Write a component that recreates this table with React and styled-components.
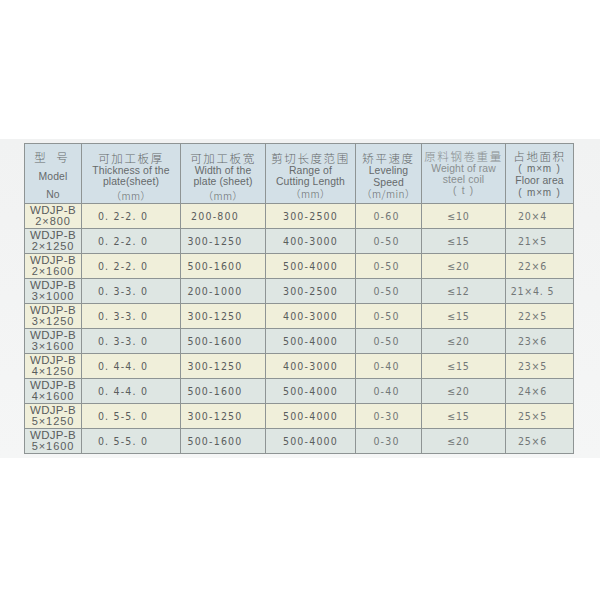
import React from "react";
import styled, { createGlobalStyle } from "styled-components";

const Global = createGlobalStyle`
  html, body { margin: 0; padding: 0; background: #ffffff; }
  body { font-family: "Liberation Sans", Arial, sans-serif; }
`;

const Page = styled.div`
  width: 600px;
  height: 600px;
  padding-top: 139px;
  box-sizing: border-box;
`;

const Band = styled.div`
  background: linear-gradient(#f1f2f2, #f5f6f6);
  padding: 4px 0 4px 24px;
`;

const Table = styled.table`
  border-collapse: collapse;
  table-layout: fixed;
  width: 549px;
  border: 1px solid #6f7272;
  color: #585b5b;
`;

const HeadRow = styled.tr`
  height: 60px;
  background: #d3e0e7;
`;

const HeadCell = styled.th`
  border: 1px solid #8e9494;
  vertical-align: top;
  padding: ${(p) => p.$top}px 0 0 0;
  font-weight: normal;
  text-align: center;
  color: ${(p) => (p.$light ? "#8a8f90" : "#666a6b")};
`;

const Cn = styled.div`
  font-family: "Noto Sans CJK SC", sans-serif;
  font-size: 11.5px;
  line-height: 13px;
  letter-spacing: ${(p) => p.$ls ?? 1.6}px;
  font-weight: 300;
`;

const En = styled.div`
  font-size: 10.4px;
  line-height: ${(p) => p.$lh || 11}px;
  letter-spacing: 0.1px;
`;

const Unit = styled.div`
  font-family: ${(p) =>
    p.$latin ? '"Liberation Sans", sans-serif' : '"Noto Sans CJK SC", sans-serif'};
  font-size: 10px;
  line-height: 12px;
  margin-top: ${(p) => p.$gap || 0}px;
  letter-spacing: ${(p) => (p.$latin ? 0.8 : 0.5)}px;
  word-spacing: 1px;
  font-weight: 300;
`;

const ModelHead = styled.div`
  display: flex;
  flex-direction: column;
  align-items: center;
  gap: 7px;
`;

const Row = styled.tr`
  height: 25px;
  background: ${(p) => (p.$alt ? "#dee6e3" : "#f0efda")};
`;

const ModelCell = styled.td`
  border: 1px solid #8e9494;
  text-align: center;
  padding: 0;
  font-size: 11px;
  line-height: 11.5px;
  color: #5a5d5d;
`;

const ModelName = styled.div`
  letter-spacing: 0.3px;
  font-size: 11.5px;
`;

const ModelSize = styled.div`
  letter-spacing: 0.9px;
`;

const Cell = styled.td`
  border: 1px solid #8e9494;
  text-align: center;
  padding: 0 ${(p) => p.$shift || 0}px 0 0;
  font-family: "DejaVu Sans Condensed", "Liberation Sans", sans-serif;
  font-size: 10.5px;
  letter-spacing: ${(p) => p.$ls}px;
  color: ${(p) => (p.$light ? "#727777" : "#5a5d5d")};
`;

const cols = [57, 99, 85, 90, 66, 84, 68];

const headers = [
  { cn: "可加工板厚", en: ["Thickness of the", "plate(sheet)"], unit: "（mm）", top: 8, gap: 3 },
  { cn: "可加工板宽", en: ["Width of the", "plate (sheet)"], unit: "（mm）", top: 8, gap: 3 },
  { cn: "剪切长度范围", en: ["Range of", "Cutting Length"], unit: "（mm）", top: 8, gap: 1 },
  { cn: "矫平速度", en: ["Leveling", "Speed"], unit: "（m/min）", top: 8, gap: 0, lh: 11.5 },
  { cn: "原料钢卷重量", en: ["Weight of raw", "steel coil"], unit: "( t )", latin: true, top: 6, gap: 0, light: true },
  { cn: "占地面积", unit0: "( m×m )", en: ["Floor area"], unit: "( m×m )", latin: true, top: 6, gap: 1 },
];

const rows = [
  ["2×800", "0. 2-2. 0", "200-800", "300-2500", "0-60", "≤10", "20×4"],
  ["2×1250", "0. 2-2. 0", "300-1250", "400-3000", "0-50", "≤15", "21×5"],
  ["2×1600", "0. 2-2. 0", "500-1600", "500-4000", "0-50", "≤20", "22×6"],
  ["3×1000", "0. 3-3. 0", "200-1000", "300-2500", "0-50", "≤12", "21×4. 5"],
  ["3×1250", "0. 3-3. 0", "300-1250", "400-3000", "0-50", "≤15", "22×5"],
  ["3×1600", "0. 3-3. 0", "500-1600", "500-4000", "0-50", "≤20", "23×6"],
  ["4×1250", "0. 4-4. 0", "300-1250", "400-3000", "0-40", "≤15", "23×5"],
  ["4×1600", "0. 4-4. 0", "500-1600", "500-4000", "0-40", "≤20", "24×6"],
  ["5×1250", "0. 5-5. 0", "300-1250", "500-4000", "0-30", "≤15", "25×5"],
  ["5×1600", "0. 5-5. 0", "500-1600", "500-4000", "0-30", "≤20", "25×6"],
];

const shifts = [16, 16, 0, 4, 10, 14];

export default function App() {
  return (
    <>
      <Global />
      <Page>
        <Band>
          <Table>
            <colgroup>
              {cols.map((w, i) => (
                <col key={i} style={{ width: w }} />
              ))}
            </colgroup>
            <thead>
              <HeadRow>
                <HeadCell $top={7}>
                  <ModelHead>
                    <Cn $ls={4}>型 号</Cn>
                    <En>Model</En>
                    <En>No</En>
                  </ModelHead>
                </HeadCell>
                {headers.map((h, i) => (
                  <HeadCell key={i} $top={h.top} $light={h.light}>
                    <Cn>{h.cn}</Cn>
                    {h.unit0 && <Unit $latin={h.latin}>{h.unit0}</Unit>}
                    {h.en.map((t) => (
                      <En key={t} $lh={h.lh}>
                        {t}
                      </En>
                    ))}
                    <Unit $gap={h.gap} $latin={h.latin}>
                      {h.unit}
                    </Unit>
                  </HeadCell>
                ))}
              </HeadRow>
            </thead>
            <tbody>
              {rows.map((r, i) => (
                <Row key={r[0]} $alt={i % 2 === 1}>
                  <ModelCell>
                    <ModelName>WDJP-B</ModelName>
                    <ModelSize>{r[0]}</ModelSize>
                  </ModelCell>
                  {r.slice(1).map((v, j) => (
                    <Cell
                      key={j}
                      $shift={shifts[j]}
                      $light={j >= 3}
                      $ls={j >= 4 ? 0.8 : 1.2}
                    >
                      {v}
                    </Cell>
                  ))}
                </Row>
              ))}
            </tbody>
          </Table>
        </Band>
      </Page>
    </>
  );
}
